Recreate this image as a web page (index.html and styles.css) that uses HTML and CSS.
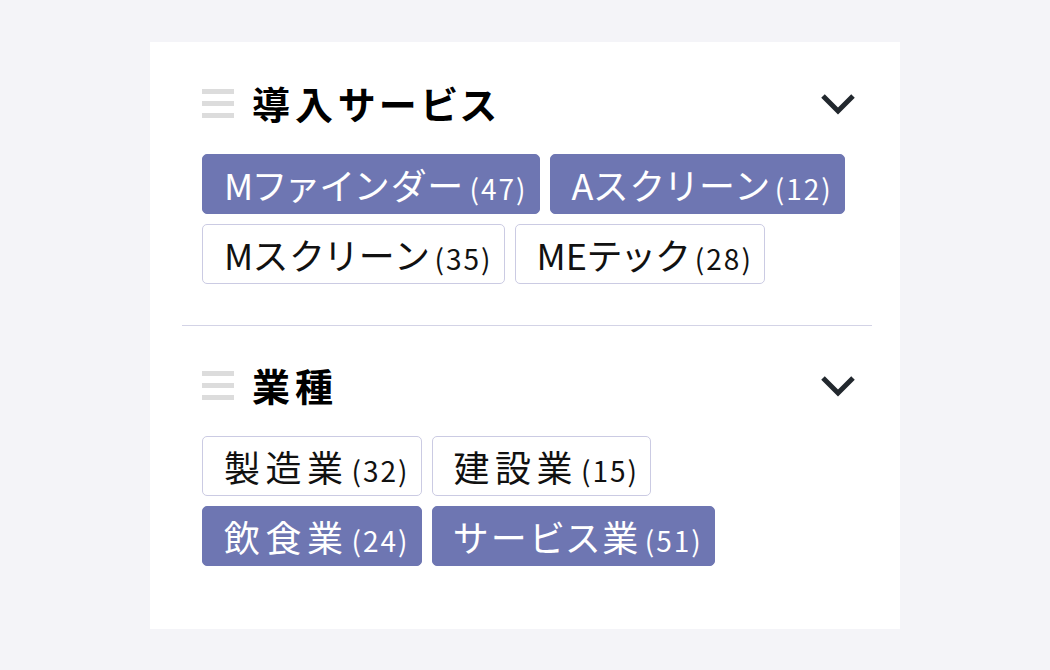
FILE: index.html
```html
<!DOCTYPE html>
<html lang="ja">
<head>
<meta charset="utf-8">
<link rel="stylesheet" href="styles.css">
</head>
<body>
<div class="card">
  <section class="section first">
    <div class="header">
      <span class="handle"><i></i><i></i><i></i></span>
      <h2 class="title">導入サービス</h2>
      <svg class="chevron" viewBox="0 0 36 22" width="36" height="22"><polyline points="3,3 18,18 33,3" fill="none" stroke="#22282e" stroke-width="5"/></svg>
    </div>
    <div class="chips">
      <span class="chip on"><span class="en">M</span>ファインダー<small>(47)</small></span>
      <span class="chip on"><span class="en">A</span>スクリーン<small>(12)</small></span>
      <span class="chip"><span class="en">M</span>スクリーン<small>(35)</small></span>
      <span class="chip"><span class="en">ME</span>テック<small>(28)</small></span>
    </div>
  </section>
  <section class="section second">
    <div class="header">
      <span class="handle"><i></i><i></i><i></i></span>
      <h2 class="title">業種</h2>
      <svg class="chevron" viewBox="0 0 36 22" width="36" height="22"><polyline points="3,3 18,18 33,3" fill="none" stroke="#22282e" stroke-width="5"/></svg>
    </div>
    <div class="chips">
      <span class="chip"><span class="kj">製造業</span><small>(32)</small></span>
      <span class="chip"><span class="kj">建設業</span><small>(15)</small></span>
      <span class="chip on"><span class="kj">飲食業</span><small>(24)</small></span>
      <span class="chip on">サービス業<small>(51)</small></span>
    </div>
  </section>
</div>
</body>
</html>
```

FILE: styles.css
```css
html, body {
  margin: 0;
  padding: 0;
  background: #f4f4f8;
  font-family: "Noto Sans CJK JP", "Noto Sans", sans-serif;
  color: #111;
}
body {
  padding: 42px 150px 0 150px;
}
.card {
  width: 750px;
  height: 587px;
  background: #fff;
  box-sizing: border-box;
  padding: 0 28px 0 32px;
}
.section {
  padding: 0 16px 0 20px;
}
.section.first {
  padding-top: 36px;
  padding-bottom: 41px;
  border-bottom: 1px solid #d3d3e6;
}
.section.second {
  padding-top: 34px;
}
.header {
  display: flex;
  align-items: center;
  height: 50px;
  margin-bottom: 26px;
}
.handle {
  display: flex;
  flex-direction: column;
  gap: 7px;
  width: 32px;
  margin-right: 18px;
}
.handle i {
  display: block;
  height: 5px;
  background: #dcdcdc;
}
.title {
  margin: 0;
  flex: 1;
  font-size: 38px;
  font-weight: 700;
  letter-spacing: 5px;
  font-feature-settings: "palt";
  line-height: 50px;
  color: #000;
}
.chevron {
  display: block;
  margin-top: 2px;
}
.chips {
  display: flex;
  flex-wrap: wrap;
  gap: 10px;
}
.chip {
  display: inline-flex;
  align-items: baseline;
  box-sizing: border-box;
  height: 60px;
  padding: 7px 11px 7px 21px;
  line-height: 44px;
  font-size: 36px;
  letter-spacing: 3.5px;
  font-feature-settings: "palt";
  border: 1px solid #cbcbe3;
  border-radius: 5px;
  background: #fff;
  color: #111;
  white-space: nowrap;
}
.chip.on {
  background: #6e76b2;
  border-color: #6e76b2;
  color: #fff;
}
.chip .en {
  letter-spacing: 0;
  margin-right: 1px;
}
.chip .kj {
  letter-spacing: 5.5px;
}
.chip small {
  font-size: 28px;
  letter-spacing: 2px;
  margin-left: 3px;
}
```
